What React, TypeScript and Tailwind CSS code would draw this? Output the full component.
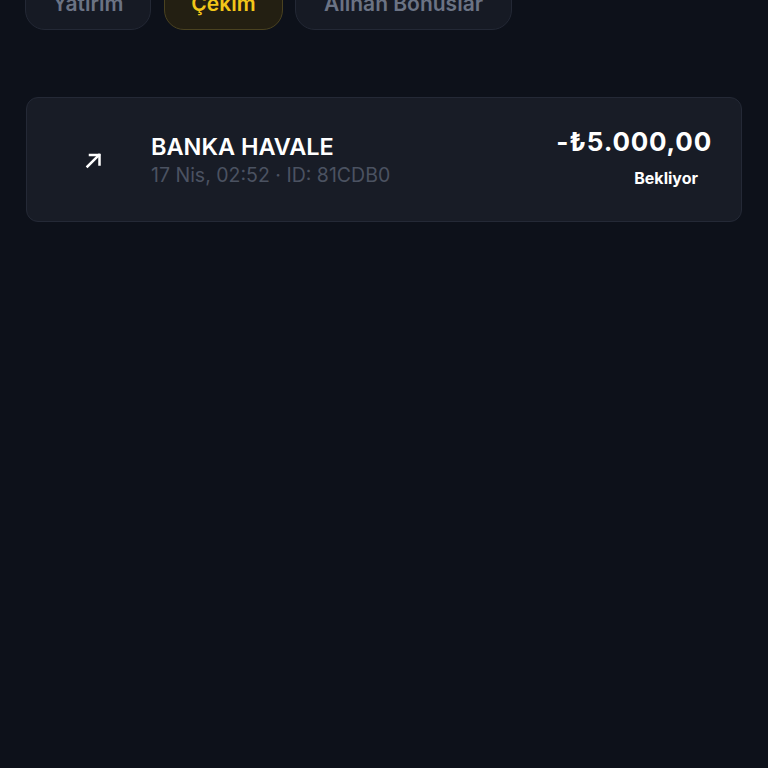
import React from "react";

export default function App() {
  return (
    <div className="min-h-[768px] w-[768px] overflow-hidden bg-[#0d111a]" style={{ fontFamily: "Inter, 'Noto Sans', sans-serif" }}>
      <div className="-mt-[26px] flex pl-[25px]">
        <div className="flex h-[56px] w-[126px] items-center justify-center rounded-[20px] border border-[#232835] bg-[#161a24] pt-[3px] text-[21px] font-semibold text-[#6b7384]">Yatırım</div>
        <div className="ml-[13px] flex h-[56px] w-[119px] items-center justify-center rounded-[20px] border border-[#4a4220] bg-[#231f12] pt-[3px] text-[21px] font-semibold text-[#f2c619]">Çekim</div>
        <div className="ml-[12px] flex h-[56px] w-[217px] items-center justify-center rounded-[20px] border border-[#232835] bg-[#161a24] pt-[3px] text-[21px] font-semibold text-[#6b7384]">Alınan Bonuslar</div>
      </div>
      <div className="mx-[26px] mt-[67px] flex h-[125px] items-center rounded-[12px] border border-[#242936] bg-[#181c26] pl-[43px] pr-[29px]">
        <div className="flex h-[48px] w-[48px] items-center justify-center">
          <svg width="24" height="24" viewBox="0 0 24 24" fill="none" stroke="#ffffff" strokeWidth="2.5" strokeLinecap="square">
            <path d="M5.5 18.5L17 7" />
            <path d="M8 7h9.5v9.5" />
          </svg>
        </div>
        <div className="ml-[33px] flex flex-1 flex-col">
          <div className="text-[23.5px] font-semibold leading-[28px] text-white">BANKA HAVALE</div>
          <div className="mt-[2px] text-[19.5px] leading-[24px] text-[#4b5261]">17 Nis, 02:52 · ID: 81CDB0</div>
        </div>
        <div className="-mt-[5px] flex flex-col items-end">
          <div className="text-[26px] font-bold leading-[32px] tracking-[0.8px] text-white">-₺5.000,00</div>
          <div className="mr-[14px] mt-[10px] text-[16px] font-bold leading-[20px] text-white">Bekliyor</div>
        </div>
      </div>
    </div>
  );
}
